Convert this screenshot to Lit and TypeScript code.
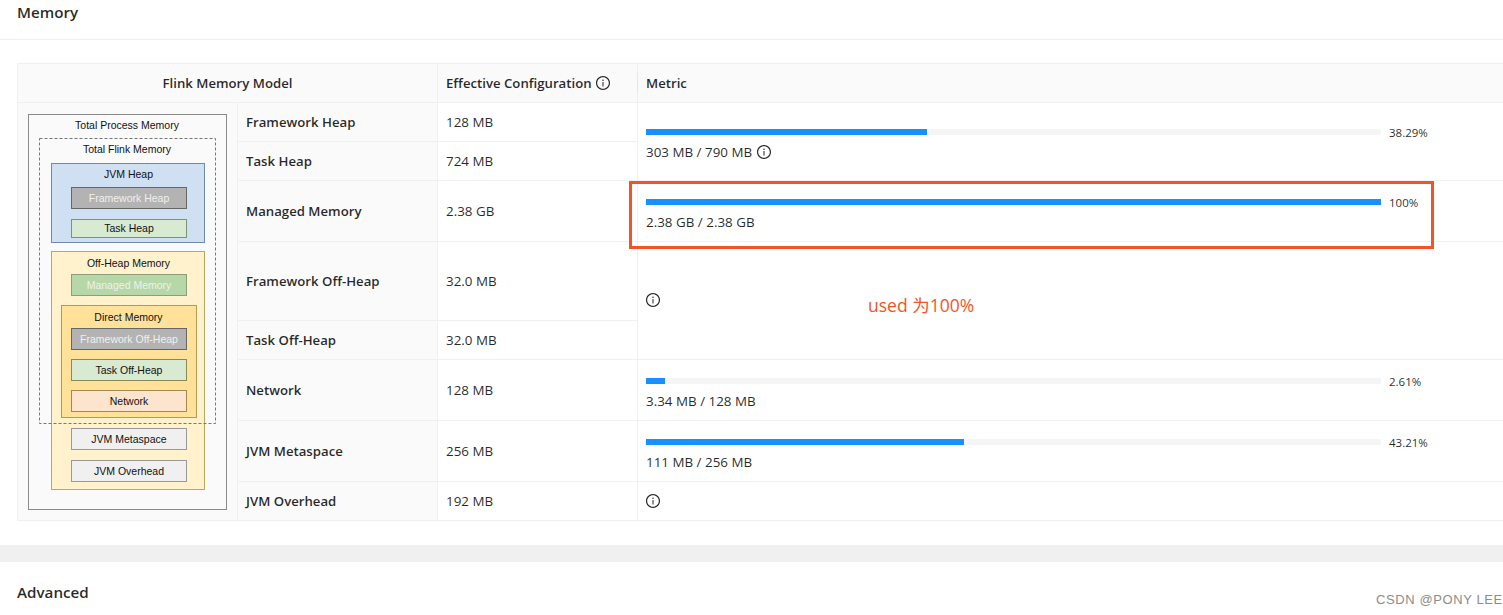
import { LitElement, html, css, svg } from "lit";
import { customElement } from "lit/decorators.js";

const infoIcon = html`<svg class="info" viewBox="64 64 896 896" width="14" height="14" fill="currentColor" aria-hidden="true"><path d="M512 64C264.6 64 64 264.6 64 512s200.6 448 448 448 448-200.6 448-448S759.4 64 512 64zm0 820c-205.4 0-372-166.6-372-372s166.6-372 372-372 372 166.6 372 372-166.6 372-372 372z"></path><path d="M464 336a48 48 0 1 0 96 0 48 48 0 1 0-96 0zm72 112h-48c-4.4 0-8 3.6-8 8v272c0 4.4 3.6 8 8 8h48c4.4 0 8-3.6 8-8V456c0-4.4-3.6-8-8-8z"></path></svg>`;

type Box = { x: number; y: number; w: number; h: number; fill: string; stroke: string; label: string; tx: number; ty: number; color?: string };

const OX = 18;
const OY = 103;
const boxes: Box[] = [
  { x: 28.5, y: 114.5, w: 198, h: 395, fill: "#fafafa", stroke: "#8a8a8a", label: "Total Process Memory", tx: 127, ty: 129 },
  { x: 51.5, y: 251.5, w: 153, h: 238, fill: "#fff2cc", stroke: "#bfa75e", label: "Off-Heap Memory", tx: 128.5, ty: 267 },
  { x: 51.5, y: 163.5, w: 153, h: 79, fill: "#cfe0f2", stroke: "#6f8aa8", label: "JVM Heap", tx: 128.5, ty: 178 },
  { x: 71.5, y: 187.5, w: 115, h: 21, fill: "#b3b3b3", stroke: "#666", label: "Framework Heap", tx: 129, ty: 202, color: "#f0f0f0" },
  { x: 71.5, y: 219.5, w: 115, h: 18, fill: "#d9ead3", stroke: "#7f9477", label: "Task Heap", tx: 129, ty: 232 },
  { x: 71.5, y: 274.5, w: 115, h: 21, fill: "#b6d7a8", stroke: "#8d9f7a", label: "Managed Memory", tx: 129, ty: 289, color: "#f0f0f0" },
  { x: 61.5, y: 305.5, w: 135, h: 112, fill: "#ffe19a", stroke: "#b59a50", label: "Direct Memory", tx: 128.5, ty: 321 },
  { x: 71.5, y: 328.5, w: 115, h: 21, fill: "#b3b3b3", stroke: "#666", label: "Framework Off-Heap", tx: 129, ty: 343, color: "#f0f0f0" },
  { x: 71.5, y: 359.5, w: 115, h: 21, fill: "#d9ead3", stroke: "#8a8a50", label: "Task Off-Heap", tx: 129, ty: 374 },
  { x: 71.5, y: 390.5, w: 115, h: 21, fill: "#fde4cc", stroke: "#a08a50", label: "Network", tx: 129, ty: 405 },
  { x: 71.5, y: 428.5, w: 115, h: 21, fill: "#f0f0f0", stroke: "#999", label: "JVM Metaspace", tx: 129, ty: 443 },
  { x: 71.5, y: 460.5, w: 115, h: 21, fill: "#f0f0f0", stroke: "#999", label: "JVM Overhead", tx: 129, ty: 475 },
];

function diagram() {
  return html`<svg class="model" width="219" height="418" viewBox="${OX} ${OY} 219 418">
    ${boxes.map(
      (b) => svg`<rect x=${b.x} y=${b.y} width=${b.w} height=${b.h} fill=${b.fill} stroke=${b.stroke}></rect>
        <text x=${b.tx} y=${b.ty} text-anchor="middle" fill=${b.color ?? "#111"}>${b.label}</text>`
    )}
    <rect x="39.5" y="138.5" width="176" height="285" fill="none" stroke="#777" stroke-dasharray="3 2"></rect>
    <text x="127" y="153" text-anchor="middle" fill="#111">Total Flink Memory</text>
  </svg>`;
}

@customElement("metric-bar")
class MetricBar extends LitElement {
  static properties = { pct: {}, label: {}, width: { type: Number }, info: { type: Boolean } };
  declare pct: string;
  declare label: string;
  declare width: number;
  declare info: boolean;
  static styles = css`
    :host { display: block; }
    .bar { display: flex; align-items: center; gap: 8px; height: 20px; }
    .track { width: 735px; height: 6px; background: #f5f5f5; flex: none; }
    .fill { height: 6px; background: #1890ff; }
    .pct { font-size: 11.5px; line-height: 20px; color: rgba(0, 0, 0, 0.85); position: relative; top: 1px; }
    .label { display: flex; align-items: center; gap: 5px; height: 20px; line-height: 20px; }
    .info { display: block; }
  `;
  render() {
    return html`<div class="bar">
        <div class="track"><div class="fill" style="width:${this.width}%"></div></div>
        <span class="pct">${this.pct}</span>
      </div>
      <div class="label">${this.label}${this.info ? infoIcon : ""}</div>`;
  }
}

@customElement("app-root")
export class AppRoot extends LitElement {
  static styles = css`
    :host {
      display: block; position: relative; width: 1503px; height: 615px; overflow: hidden;
      background: #fff; color: rgba(0, 0, 0, 0.85);
      font-family: "Open Sans", "Noto Sans CJK SC", sans-serif; font-size: 13.4px;
    }
    .title { height: 39px; border-bottom: 1px solid #f0f0f0; padding: 0 17px; font-size: 15.2px; font-weight: 600; line-height: 24px; }
    .body { padding: 23px 0 24px 17px; }
    .table {
      display: grid;
      grid-template-columns: 220px 200px 200px 1fr;
      grid-template-rows: 39px 39px 39px 61px 79px 39px 61px 61px 39px;
      border-top: 1px solid #f0f0f0; border-left: 1px solid #f0f0f0;
    }
    .cell {
      display: flex; align-items: center; padding: 0 8px;
      border-right: 1px solid #f0f0f0; border-bottom: 1px solid #f0f0f0; min-width: 0; white-space: nowrap;
    }
    .head { background: #fafafa; font-weight: 600; font-size: 13.2px; position: relative; }
    .head-model { grid-column: 1 / 3; justify-content: center; }
    .head-conf { gap: 4px; grid-column: 3; }
    .head-metric { grid-column: 4; border-right: none; }
    .head-conf::after {
      content: ""; position: absolute; right: -1px; top: 9px; height: 21px; width: 1px; background: #e6e6e6;
    }
    .name { grid-column: 2; background: #fafafa; font-weight: 600; font-size: 13.2px; }
    .value { grid-column: 3; }
    .diagram { grid-column: 1; grid-row: 2 / 10; background: #fafafa; padding: 0; display: block; }
    .model { display: block; }
    .model text { font-family: "Liberation Sans", sans-serif; font-size: 10.5px; }
    .metric { grid-column: 4; padding: 0 8px; align-self: stretch; border-right: none; }
    .metric.center { display: flex; flex-direction: column; justify-content: center; align-items: stretch; padding-top: 1px; }
    .metric.plain { display: flex; align-items: center; }
    .r2-3 { grid-row: 2 / 4; }
    .r5-6 { grid-row: 5 / 7; padding-bottom: 2px; }
    .info { display: block; }
    .band { height: 17px; background: #f0f0f0; }
    .advanced { padding: 18px 17px 0; font-size: 15.2px; font-weight: 600; line-height: 24px; }
    .highlight { position: absolute; left: 629px; top: 181px; width: 799px; height: 62px; border: 3px solid #f15527; pointer-events: none; }
    .note { position: absolute; left: 868px; top: 293px; font-size: 17.5px; line-height: 24px; color: #f15527; }
    .csdn { position: absolute; left: 1376px; top: 592px; font-family: "Liberation Sans", sans-serif; font-size: 13px; line-height: 16px; letter-spacing: 0.6px; color: #8c8c8c; }
    .marks {
      position: absolute; left: 127px; top: 53px; display: grid;
      grid-template-columns: repeat(7, 200px); grid-auto-rows: 130px; pointer-events: none;
    }
    .marks span {
      display: flex; align-items: center; justify-content: center; transform: rotate(-22deg);
      font-size: 14px; color: rgba(0, 0, 0, 0.022); white-space: nowrap;
    }
  `;

  render() {
    const marks = Array.from({ length: 28 }, () => html`<span>lijianjun46_706241</span>`);
    return html`
      <div class="title">Memory</div>
      <div class="body">
        <div class="table">
          <div class="cell head head-model">Flink Memory Model</div>
          <div class="cell head head-conf">Effective Configuration ${infoIcon}</div>
          <div class="cell head head-metric">Metric</div>

          <div class="cell diagram">${diagram()}</div>
          <div class="cell name">Framework Heap</div>
          <div class="cell value">128 MB</div>
          <div class="cell metric center r2-3"><metric-bar pct="38.29%" label="303 MB / 790 MB" width="38.29" info></metric-bar></div>

          <div class="cell name">Task Heap</div>
          <div class="cell value">724 MB</div>

          <div class="cell name">Managed Memory</div>
          <div class="cell value">2.38 GB</div>
          <div class="cell metric center"><metric-bar pct="100%" label="2.38 GB / 2.38 GB" width="100"></metric-bar></div>

          <div class="cell name">Framework Off-Heap</div>
          <div class="cell value">32.0 MB</div>
          <div class="cell metric plain r5-6">${infoIcon}</div>

          <div class="cell name">Task Off-Heap</div>
          <div class="cell value">32.0 MB</div>

          <div class="cell name">Network</div>
          <div class="cell value">128 MB</div>
          <div class="cell metric center"><metric-bar pct="2.61%" label="3.34 MB / 128 MB" width="2.61"></metric-bar></div>

          <div class="cell name">JVM Metaspace</div>
          <div class="cell value">256 MB</div>
          <div class="cell metric center"><metric-bar pct="43.21%" label="111 MB / 256 MB" width="43.21"></metric-bar></div>

          <div class="cell name">JVM Overhead</div>
          <div class="cell value">192 MB</div>
          <div class="cell metric plain">${infoIcon}</div>
        </div>
      </div>
      <div class="band"></div>
      <div class="advanced">Advanced</div>
      <div class="marks" aria-hidden="true">${marks}</div>
      <div class="highlight"></div>
      <div class="note">used 为100%</div>
      <div class="csdn">CSDN @PONY LEE</div>
    `;
  }
}
